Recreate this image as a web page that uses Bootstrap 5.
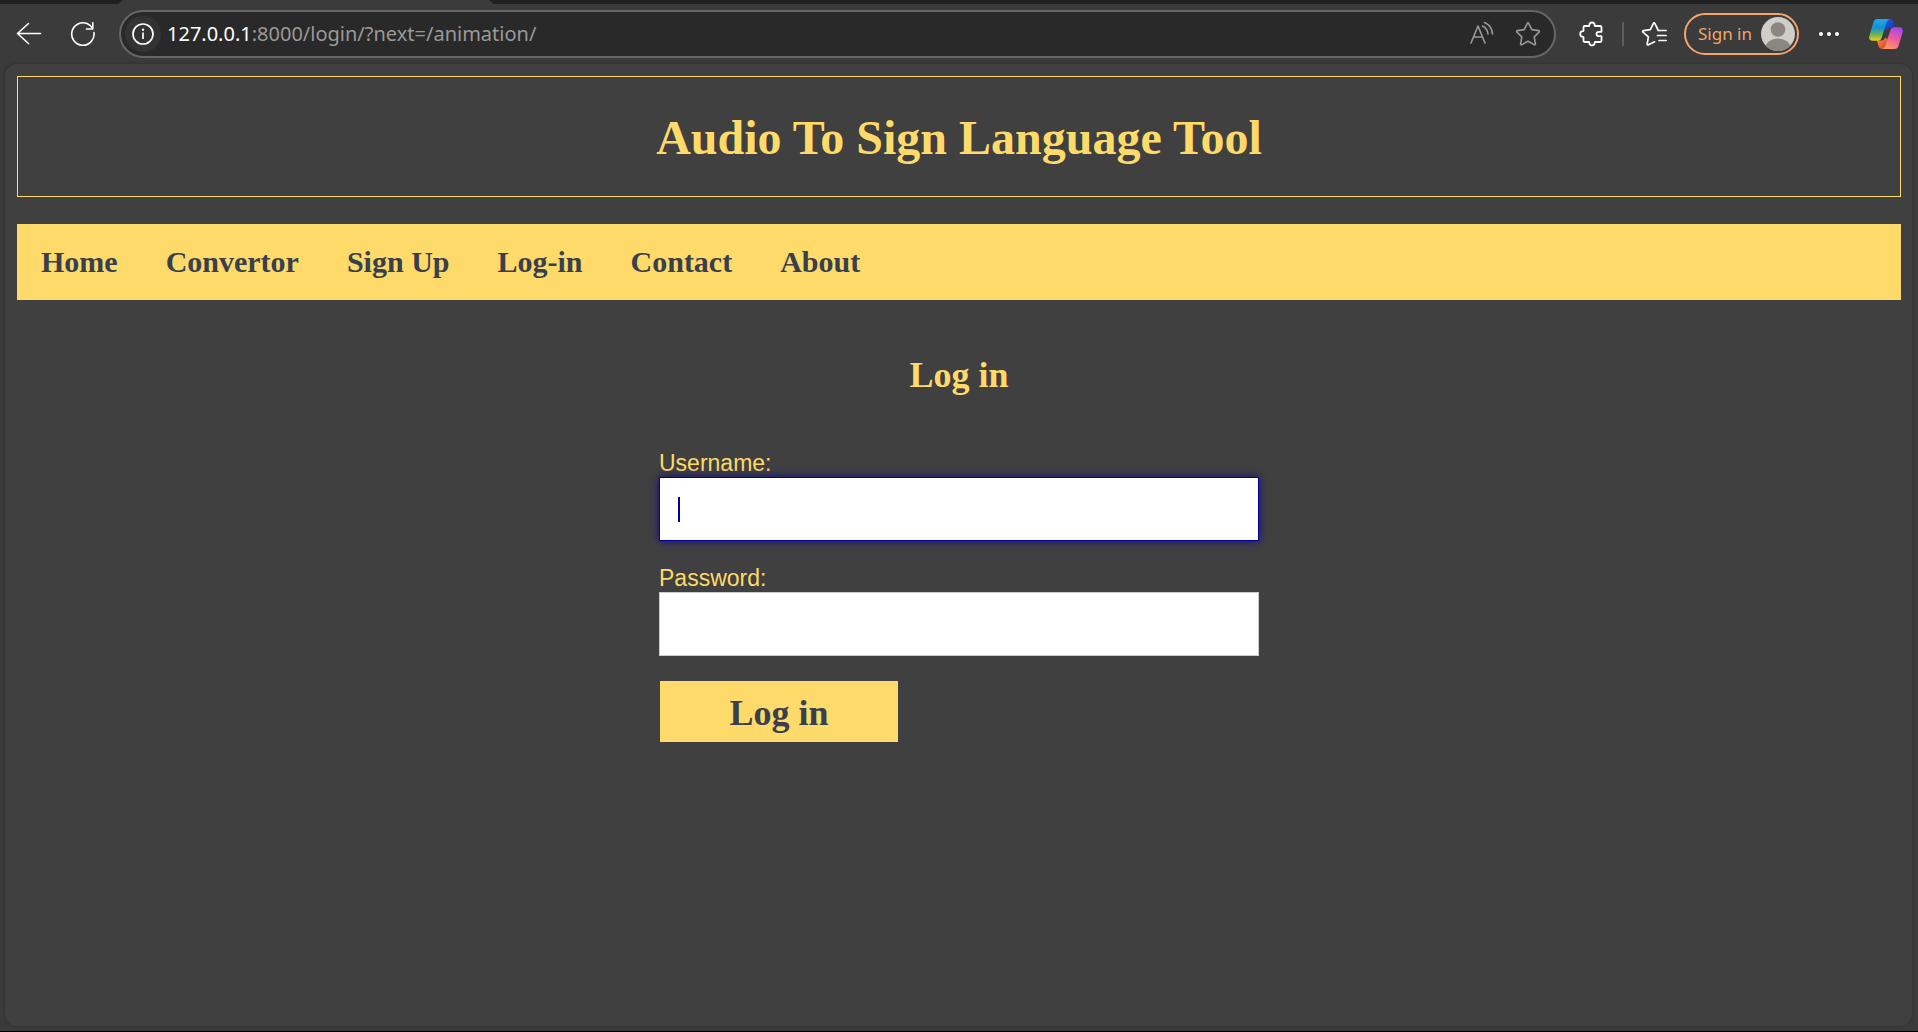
<!DOCTYPE html>
<html lang="en">
<head>
<meta charset="utf-8">
<meta name="viewport" content="width=device-width, initial-scale=1">
<title>Audio To Sign Language Tool</title>
<link href="https://cdn.jsdelivr.net/npm/bootstrap@5.3.0/dist/css/bootstrap.min.css" rel="stylesheet">
<style>
:root { --gold: #feda6a; --ink: #393f4d; --page: #404040; --chrome: #3b3b3b; }
html, body { height: 100%; }
body { background: var(--chrome); border-bottom: 1px solid #000; }
.tab-strip { height: 4px; background: #202020; padding-left: 118px; }
.active-tab { width: 376px; background: var(--chrome); clip-path: polygon(5px 0, 371px 0, 376px 100%, 0 100%); }
.toolbar { height: 60px; padding: 0 14px 0 16px; font-family: "Noto Sans", sans-serif; }
.tool-btn { background: none; border: 0; padding: 0; color: #fff; display: inline-flex; align-items: center; justify-content: center; flex: none; }
.tool-btn svg, .sign-in svg { display: block; }
.back-btn { margin-right: 28px; }
.reload-btn { margin-right: 23px; }
.address { height: 48px; background: #292929; border: 2px solid #666; border-radius: 24px; padding: 0 13px 0 4px; margin-right: 23px; gap: 20px; }
.address .tool-btn { color: #999; }
.address .site-info { width: 36px; height: 36px; border-radius: 18px; background: #333; color: #fff; margin-right: -14px; }
.url-line { font-size: 20px; line-height: 28px; color: #999; }
.url-line span { color: #fff; }
.tools { gap: 17px; }
.copilot-btn { margin-left: 9px; }
.divider { width: 2px; height: 24px; background: #5e5e5e; }
.sign-in { height: 42px; width: 115px; border: 2px solid #f5a46c; border-radius: 21px; background: none; color: #f5a46c; font-size: 17px; line-height: 24px; padding: 0 2px 0 12px; }
.page-view { background: var(--page); border-radius: 12px; margin: 0 6px 5px 5px; padding: 12px 11px 0 12px; box-shadow: 0 0 3px #2c2c2c; font-family: "Liberation Serif", serif; }
.site-title { border: 1px solid var(--gold); color: var(--gold); padding: 32px 0 30px; font-size: 48px; line-height: 57px; font-weight: 700; margin-bottom: 27px; }
.site-nav { background: var(--gold); }
.site-nav a { color: var(--ink); font-size: 30px; line-height: 36px; font-weight: 700; padding: 20px 24px; }
.form-title { color: var(--gold); font-size: 36px; line-height: 42px; font-weight: 700; margin: 54px 0; }
.login-form { max-width: 600px; font-family: "Liberation Sans", sans-serif; }
.login-form label { color: var(--gold); font-size: 23px; line-height: 27px; }
.field-box { margin-bottom: 24px; }
.login-form .form-control { height: 64px; border: 1px solid #ccc; border-radius: 0; padding: 16px 18px; font-size: 26px; line-height: 30px; color: #00009b; }
.login-form .form-control:focus { border-color: #00009b; box-shadow: 0 0 9px rgba(0, 0, 155, .8); caret-color: transparent; }
.login-form .btn { font-family: "Liberation Serif", serif; background: var(--gold); color: var(--ink); font-size: 36px; line-height: 41px; font-weight: 700; border: 0; border-radius: 0; width: 238px; padding: 12px 0 8px; margin: 1px; }
.caret-mark { left: 19px; top: 20px; width: 2px; height: 25px; background: #00009b; }
</style>
</head>
<body class="d-flex flex-column">
<div class="tab-strip d-flex"><div class="active-tab"></div></div>
<header class="toolbar d-flex align-items-center">
  <button class="tool-btn back-btn" type="button" aria-label="Back"><svg width="26" height="26" viewBox="0 0 26 26" fill="none" stroke="currentColor" stroke-width="1.6" stroke-linecap="round" stroke-linejoin="round"><path d="M24.500 12.500H1.500M12.500 2.500l-11 10 11 10"/></svg></button>
  <button class="tool-btn reload-btn" type="button" aria-label="Reload"><svg width="26" height="26" viewBox="0 0 26 26" fill="none" stroke="currentColor" stroke-width="1.6" stroke-linecap="round" stroke-linejoin="round"><path d="M24 11.500A11.200 11.200 0 1 1 17.500 2.800Q20.500 4.200 22.800 7.200M22.800 1.800v6.200h-6.300"/></svg></button>
  <div class="address d-flex align-items-center flex-grow-1">
    <button class="tool-btn site-info" type="button" aria-label="Site information"><svg width="22" height="22" viewBox="0 0 22 22" fill="none" stroke="currentColor" stroke-width="1.700"><circle cx="11" cy="11" r="10"/><path d="M11 9.500v6.500"/><circle cx="11" cy="6.700" r="1.200" fill="currentColor" stroke="none"/></svg></button>
    <div class="url-line flex-grow-1"><span>127.0.0.1</span>:8000/login/?next=/animation/</div>
    <button class="tool-btn" type="button" aria-label="Read aloud"><svg width="26" height="26" viewBox="0 0 26 26" fill="none" stroke="currentColor" stroke-width="1.600" stroke-linecap="round" stroke-linejoin="round"><path d="M2 22 9 5l7 17M4.500 16h9M13.500 5Q18.500 7.500 19 13M15.500 1.500Q23 4.500 23.500 13"/></svg></button>
    <button class="tool-btn" type="button" aria-label="Add to favorites"><svg width="26" height="26" viewBox="0 0 26 26" fill="none" stroke="currentColor" stroke-width="1.600" stroke-linejoin="round"><path d="M12.200 2.600q.8-1.400 1.600 0l3 6 6.800 1q1.400.4.500 1.500l-4.900 4.700 1.200 6.900q.1 1.400-1.300.9L13 20.300l-6.100 3.300q-1.400.5-1.300-.9l1.200-6.900-4.900-4.700q-.9-1.100.5-1.500l6.800-1z"/></svg></button>
  </div>
  <div class="tools d-flex align-items-center">
    <button class="tool-btn" type="button" aria-label="Extensions"><svg width="26" height="26" viewBox="0 0 26 26" fill="none" stroke="currentColor" stroke-width="1.800" stroke-linejoin="round"><path d="M5.500 5h4.500q.3 0 .3-.6Q10.300 1.500 13 1.500t2.700 2.900q0 .6.300.6h5q1.500 0 1.500 1.500v4q0 .5-.6.400Q17.500 10.300 17.500 13t4.400 2.100q.6-.1.6.4v4q0 1.500-1.500 1.500h-5q-.3 0-.3.600Q15.700 24.500 13 24.500t-2.700-2.900q0-.6-.3-.6H6q-1.500 0-1.500-1.500v-3.200q0-.5-.6-.5Q1.200 15.700 1.200 13t2.700-2.800q.6 0 .6-.5V6.500Q4.500 5 5.500 5z"/></svg></button>
    <div class="divider"></div>
    <button class="tool-btn" type="button" aria-label="Favorites"><svg width="26" height="26" viewBox="0 0 26 26" fill="none" stroke="currentColor" stroke-width="1.700" stroke-linecap="round" stroke-linejoin="round"><path d="M13.500 20.800 7.500 23.800q-1.400.5-1.300-.9l1.200-7L2 11.100q-.9-1.100.5-1.500l6.800-1 3-6q.8-1.400 1.600 0l3 6M17 9.500h8.200M16.500 14.500h8.700M18 19.500h7.200"/></svg></button>
    <button class="sign-in d-flex align-items-center justify-content-between text-nowrap" type="button">Sign in<svg width="34" height="34" viewBox="0 0 34 34"><defs><clipPath id="face"><circle cx="17" cy="17" r="17"/></clipPath></defs><circle cx="17" cy="17" r="17" fill="#d0cec9"/><g fill="#8a8783" clip-path="url(#face)"><circle cx="17" cy="12.500" r="7.300"/><ellipse cx="17" cy="31" rx="12.500" ry="9.500"/></g></svg></button>
    <button class="tool-btn" type="button" aria-label="Settings and more"><svg width="26" height="26" viewBox="0 0 26 26" fill="currentColor"><circle cx="5" cy="13" r="2"/><circle cx="13" cy="13" r="2"/><circle cx="21" cy="13" r="2"/></svg></button>
    <button class="tool-btn copilot-btn" type="button" aria-label="Copilot"><svg width="36" height="32" viewBox="0 0 36 32"><defs>
      <linearGradient id="cool" x1="0" y1="0" x2="0" y2="1"><stop offset="0" stop-color="#22a7ef"/><stop offset=".4" stop-color="#1690d4"/><stop offset=".7" stop-color="#62b35a"/><stop offset="1" stop-color="#f4cf10"/></linearGradient>
      <linearGradient id="deep" x1="0" y1="0" x2="1" y2="1"><stop offset="0" stop-color="#1b5fe0"/><stop offset="1" stop-color="#1237b8"/></linearGradient>
      <linearGradient id="warm" x1=".7" y1="0" x2=".3" y2="1"><stop offset="0" stop-color="#a347ee"/><stop offset=".5" stop-color="#ee5c9c"/><stop offset="1" stop-color="#ff9a64"/></linearGradient>
      <linearGradient id="ember" x1="0" y1="0" x2="1" y2="1"><stop offset="0" stop-color="#ff9b35"/><stop offset="1" stop-color="#d92f3c"/></linearGradient></defs>
      <path d="M16 1h5.500q3 0 4 3l1.600 5.500h-4.300q-3 0-4 3l-2.800-2z" fill="url(#deep)"/>
      <path d="M20 31h-5.500q-3 0-4-3L9 22.500h4.200q3 0 4-3l2.800 2z" fill="url(#ember)"/>
      <path d="M9.500 1H22q-2.500.4-3.500 3.500l-4.800 15.300q-1 2.900-4 2.900H5q-5 0-3.500-5.500L5.500 4q1-3 4-3z" fill="url(#cool)"/>
      <path d="M26.500 31H14q2.500-.4 3.500-3.500l4.800-15.300q1-2.900 4-2.900H31q5 0 3.500 5.500L30.500 28q-1 3-4 3z" fill="url(#warm)"/></svg></button>
  </div>
</header>
<main class="page-view flex-grow-1">
  <h1 class="site-title text-center">Audio To Sign Language Tool</h1>
  <nav class="site-nav d-flex flex-wrap">
    <a class="text-decoration-none" href="#">Home</a>
    <a class="text-decoration-none" href="#">Convertor</a>
    <a class="text-decoration-none" href="#">Sign Up</a>
    <a class="text-decoration-none" href="#">Log-in</a>
    <a class="text-decoration-none" href="#">Contact</a>
    <a class="text-decoration-none" href="#">About</a>
  </nav>
  <h2 class="form-title text-center">Log in</h2>
  <form class="login-form mx-auto">
    <label class="d-block" for="user">Username:</label>
    <div class="field-box position-relative">
      <input class="form-control" id="user" type="text" autofocus>
      <span class="caret-mark position-absolute"></span>
    </div>
    <label class="d-block" for="pass">Password:</label>
    <div class="field-box">
      <input class="form-control" id="pass" type="password">
    </div>
    <button class="btn" type="button">Log in</button>
  </form>
</main>
<script src="https://cdn.jsdelivr.net/npm/bootstrap@5.3.0/dist/js/bootstrap.bundle.min.js"></script>
</body>
</html>
